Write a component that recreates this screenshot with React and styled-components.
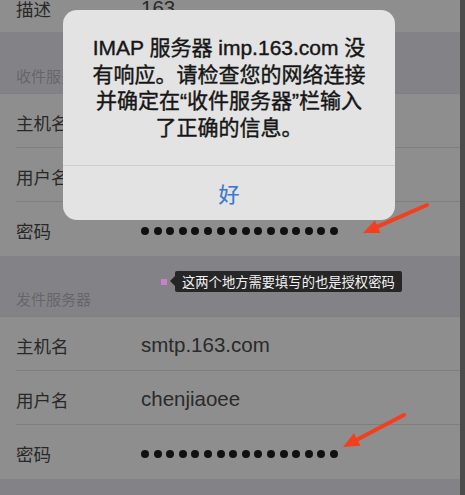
import React from 'react'
import styled, { createGlobalStyle } from 'styled-components'

const Global = createGlobalStyle`
  html, body {
    margin: 0;
    padding: 0;
    background: #838387;
  }
  body {
    font-family: "Noto Sans CJK SC", "Liberation Sans", sans-serif;
  }
`

const Screen = styled.div`
  position: relative;
  width: 465px;
  height: 495px;
  overflow: hidden;
  background: #838387;
  display: flex;
`

const Content = styled.div`
  flex: 1;
  margin-top: -19px;
  display: flex;
  flex-direction: column;
`

const EdgeBar = styled.div`
  width: 5px;
  background: #4c4c4c;
`

const Group = styled.div`
  background: #8e8e8e;
  display: flex;
  flex-direction: column;
`

const SectionHeader = styled.div`
  height: ${p => p.$h}px;
  display: flex;
  align-items: flex-end;
  padding: 0 0 7px 16px;
  box-sizing: border-box;
  font-size: 15px;
  color: #666669;
  border-bottom: 1px solid #808084;
`

const Row = styled.div`
  height: ${p => p.$h || 54}px;
  display: flex;
  align-items: center;
  margin-left: 16px;
  padding-top: 3px;
  box-sizing: border-box;
  border-bottom: ${p => (p.$last ? 'none' : '1px solid #7f7f7f')};
`

const Label = styled.div`
  width: 125px;
  font-size: 17.5px;
  color: #282828;
`

const Value = styled.div`
  font-family: "Liberation Sans", "Noto Sans CJK SC", sans-serif;
  font-size: 20.5px;
  color: #2a2a2a;
`

const Dots = styled.div`
  display: flex;
  gap: 4.6px;
`

const Dot = styled.span`
  width: 8px;
  height: 8px;
  border-radius: 50%;
  background: #111;
`

const Dialog = styled.div`
  position: absolute;
  left: 63px;
  top: 10px;
  width: 332px;
  height: 210px;
  border-radius: 14px;
  background: #e3e3e3;
  display: flex;
  flex-direction: column;
  overflow: hidden;
`

const Message = styled.div`
  height: 156px;
  box-sizing: border-box;
  padding-top: 25px;
  text-align: center;
  font-size: 21px;
  line-height: 26.5px;
  color: #161616;
  -webkit-text-stroke: 0.4px #161616;
  border-bottom: 1px solid #cdcdcd;
  font-family: "Liberation Sans", "Noto Sans CJK SC", sans-serif;
`

const OkButton = styled.div`
  flex: 1;
  display: flex;
  align-items: center;
  justify-content: center;
  font-size: 21px;
  color: #3a79d0;
  -webkit-text-stroke: 0.2px #3a79d0;
`

const Note = styled.div`
  position: absolute;
  left: 161px;
  top: 271px;
  display: flex;
  align-items: center;
`

const PinkDot = styled.span`
  width: 6px;
  height: 6px;
  background: #c97fcb;
  margin-right: 5px;
`

const Bubble = styled.div`
  position: relative;
  height: 21px;
  padding: 0 7px;
  display: flex;
  align-items: center;
  background: #262626;
  border-radius: 2px;
  color: #f2f2f2;
  font-size: 13.3px;
  margin-left: 3px;

  &::before {
    content: '';
    position: absolute;
    left: -5px;
    top: 5px;
    border-top: 5px solid transparent;
    border-bottom: 5px solid transparent;
    border-right: 5px solid #262626;
  }
`

const ArrowSvg = styled.svg`
  position: absolute;
  left: 0;
  top: 0;
  pointer-events: none;
`

const Password = () => (
  <Dots>
    {Array.from({ length: 16 }).map((_, i) => (
      <Dot key={i} />
    ))}
  </Dots>
)

const Arrow = ({ x1, y1, x2, y2 }) => {
  const dx = x2 - x1
  const dy = y2 - y1
  const len = Math.hypot(dx, dy)
  const ux = dx / len
  const uy = dy / len
  const bx = x2 - ux * 16
  const by = y2 - uy * 16
  const px = -uy * 7
  const py = ux * 7
  return (
    <g>
      <line x1={x1} y1={y1} x2={bx + ux * 2} y2={by + uy * 2} stroke="#f2401e" strokeWidth="4" strokeLinecap="round" />
      <polygon points={`${x2},${y2} ${bx + px},${by + py} ${bx - px},${by - py}`} fill="#f2401e" />
    </g>
  )
}

export default function App() {
  return (
    <Screen>
      <Global />
      <Content>
        <Group>
          <Row $last $h={51}>
            <Label>描述</Label>
            <Value>163</Value>
          </Row>
        </Group>
        <SectionHeader $h={62}>收件服务器</SectionHeader>
        <Group>
          <Row>
            <Label>主机名</Label>
            <Value>imap.163.com</Value>
          </Row>
          <Row>
            <Label>用户名</Label>
            <Value>chenjiaoee</Value>
          </Row>
          <Row $last>
            <Label>密码</Label>
            <Password />
          </Row>
        </Group>
        <SectionHeader $h={61}>发件服务器</SectionHeader>
        <Group>
          <Row>
            <Label>主机名</Label>
            <Value>smtp.163.com</Value>
          </Row>
          <Row>
            <Label>用户名</Label>
            <Value>chenjiaoee</Value>
          </Row>
          <Row $last>
            <Label>密码</Label>
            <Password />
          </Row>
        </Group>
      </Content>
      <EdgeBar />

      <Dialog>
        <Message>
          IMAP 服务器 imp.163.com 没<br />
          有响应。请检查您的网络连接<br />
          并确定在“收件服务器”栏输入<br />
          了正确的信息。
        </Message>
        <OkButton>好</OkButton>
      </Dialog>

      <Note>
        <PinkDot />
        <Bubble>这两个地方需要填写的也是授权密码</Bubble>
      </Note>

      <ArrowSvg width="465" height="495">
        <Arrow x1={427} y1={205} x2={363} y2={233} />
        <Arrow x1={404} y1={415} x2={343} y2={447} />
      </ArrowSvg>
    </Screen>
  )
}
